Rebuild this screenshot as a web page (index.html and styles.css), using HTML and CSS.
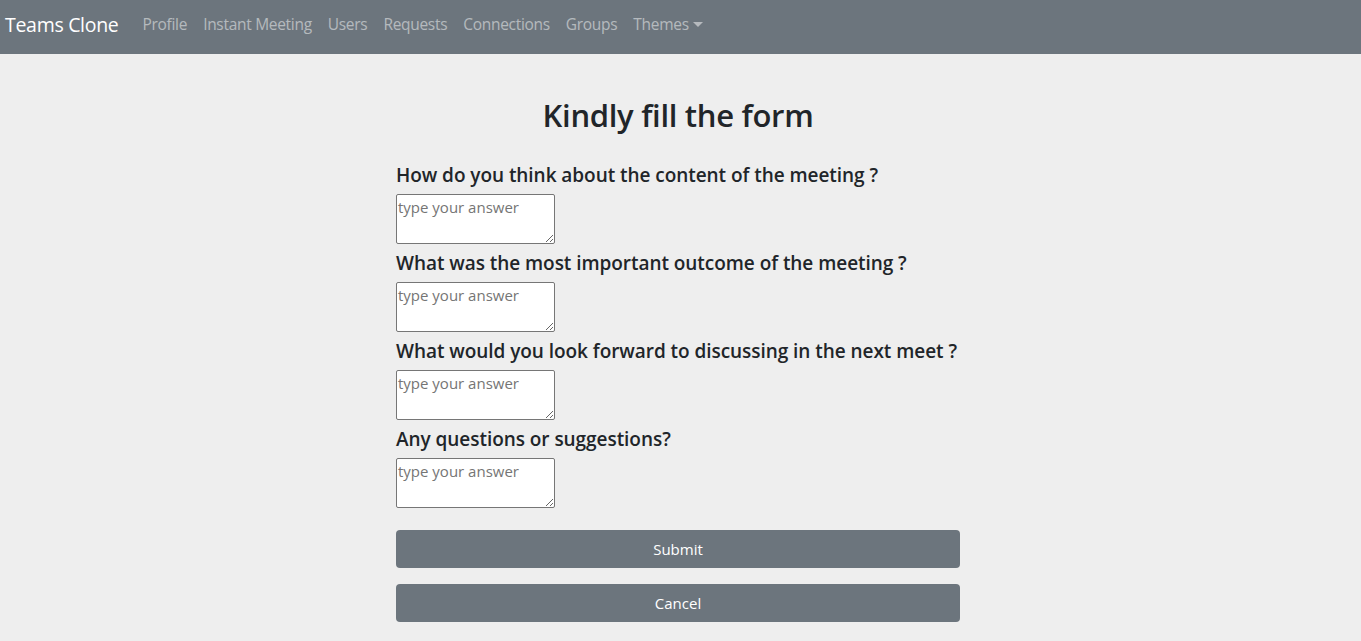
FILE: index.html
```html
<!DOCTYPE html>
<html>
<head>
<meta charset="utf-8">
<link rel="stylesheet" href="styles.css">
</head>
<body>
<nav class="navbar">
  <span class="brand">Teams Clone</span>
  <a class="nav-link">Profile</a>
  <a class="nav-link">Instant Meeting</a>
  <a class="nav-link">Users</a>
  <a class="nav-link">Requests</a>
  <a class="nav-link">Connections</a>
  <a class="nav-link">Groups</a>
  <a class="nav-link dropdown">Themes<span class="caret"></span></a>
</nav>
<main class="page">
  <form class="form">
    <h2 class="title">Kindly fill the form</h2>
    <label class="q">How do you think about the content of the meeting ?</label>
    <textarea class="answer" placeholder="type your answer"></textarea>
    <label class="q">What was the most important outcome of the meeting ?</label>
    <textarea class="answer" placeholder="type your answer"></textarea>
    <label class="q">What would you look forward to discussing in the next meet ?</label>
    <textarea class="answer" placeholder="type your answer"></textarea>
    <label class="q">Any questions or suggestions?</label>
    <textarea class="answer" placeholder="type your answer"></textarea>
    <button type="button" class="btn first">Submit</button>
    <button type="button" class="btn">Cancel</button>
  </form>
</main>
</body>
</html>
```

FILE: styles.css
```css
html, body {
  margin: 0;
  padding: 0;
}
body {
  background: #eeeeee;
  font-family: "Open Sans", "Noto Sans", sans-serif;
  color: #212529;
  height: 641px;
  overflow: hidden;
}
.navbar {
  display: flex;
  align-items: center;
  height: 54px;
  background: #6c757d;
  padding: 0 5px 6px;
  box-sizing: border-box;
}
.brand {
  color: #fff;
  font-size: 19.5px;
  margin-right: 16px;
  letter-spacing: -0.3px;
}
.nav-link {
  color: rgba(255, 255, 255, 0.5);
  font-size: 15.5px;
  padding: 0 8px;
  letter-spacing: -0.3px;
}
.dropdown {
  display: inline-flex;
  align-items: center;
}
.caret {
  display: inline-block;
  width: 0;
  height: 0;
  margin-left: 4px;
  border-top: 5px solid rgba(255, 255, 255, 0.5);
  border-left: 5px solid transparent;
  border-right: 5px solid transparent;
}
.page {
  display: flex;
  justify-content: center;
  padding-right: 5px;
}
.form {
  width: 564px;
  display: flex;
  flex-direction: column;
  align-items: flex-start;
}
.title {
  align-self: stretch;
  text-align: center;
  font-size: 31px;
  font-weight: 600;
  margin: 42px 0 22px;
  line-height: 38px;
  letter-spacing: -0.3px;
}
.q {
  font-size: 19px;
  font-weight: 600;
  line-height: 30px;
  margin: 4px 0;
  letter-spacing: -0.05px;
  white-space: nowrap;
}
.answer {
  width: 159px;
  height: 50px;
  box-sizing: border-box;
  border: 1px solid #767676;
  border-radius: 2px;
  padding: 2px 1px;
  font-family: "Open Sans", sans-serif;
  font-size: 15px;
  resize: vertical;
  margin: 0;
}
.answer::placeholder {
  color: #757575;
}
.btn {
  width: 564px;
  height: 38px;
  border: none;
  border-radius: 4px;
  background: #6c757d;
  color: #fff;
  font-family: "Open Sans", sans-serif;
  font-size: 15px;
  margin-top: 16px;
  padding: 0;
}
.btn.first {
  margin-top: 22px;
}
```
